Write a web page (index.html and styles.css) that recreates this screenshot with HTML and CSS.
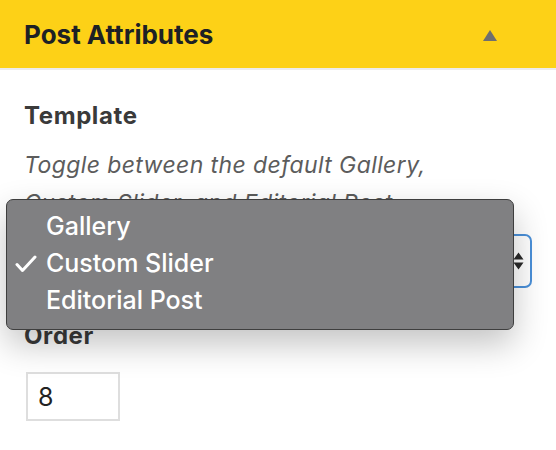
FILE: index.html
```html
<!DOCTYPE html>
<html>
<head>
<meta charset="utf-8">
<link rel="stylesheet" href="styles.css">
</head>
<body>
<div class="panel">
  <div class="panel-header">
    <h2 class="panel-title">Post Attributes</h2>
    <span class="toggle-arrow"></span>
  </div>
  <div class="panel-body">
    <div class="field-label">Template</div>
    <p class="help">Toggle between the default Gallery, Custom Slider, and Editorial Post.</p>
    <div class="select">
      <span class="select-value">Custom Slider</span>
      <svg class="select-arrows" width="11" height="20" viewBox="0 0 11 20"><path d="M5.5 1.5 L10.5 8.5 H0.5 Z M5.5 18.5 L10.5 11.5 H0.5 Z" fill="#2a2a2a"/></svg>
    </div>
    <div class="field-label order-label">Order</div>
    <div class="number-input">8</div>
  </div>
  <ul class="menu">
    <li class="menu-item">Gallery</li>
    <li class="menu-item checked"><svg class="check" width="22" height="18" viewBox="0 0 22 18"><path d="M2 9.5 L7.5 15.5 L20 2" fill="none" stroke="#fff" stroke-width="3" stroke-linecap="round" stroke-linejoin="round"/></svg>Custom Slider</li>
    <li class="menu-item">Editorial Post</li>
  </ul>
</div>
</body>
</html>
```
FILE: styles.css
```css
html, body {
  margin: 0;
  padding: 0;
  background: #fff;
}
body {
  font-family: Inter, "Liberation Sans", sans-serif;
  width: 556px;
  height: 450px;
  overflow: hidden;
}
.panel {
  position: relative;
}
.panel-header {
  height: 68px;
  background: #fdd117;
  border-bottom: 2px solid #ececec;
  display: flex;
  align-items: center;
  justify-content: space-between;
  padding: 0 24px;
}
.panel-title {
  margin: 0;
  font-size: 26px;
  font-weight: 700;
  color: #1d2125;
  letter-spacing: 0;
}
.toggle-arrow {
  width: 0;
  height: 0;
  border-left: 7px solid transparent;
  border-right: 7px solid transparent;
  border-bottom: 11px solid #6f6f6f;
  margin-right: 35px;
  margin-top: 2px;
}
.panel-body {
  padding: 30px 24px 0 24px;
}
.field-label {
  font-size: 24px;
  font-weight: 700;
  color: #3a3a3a;
  line-height: 32px;
  letter-spacing: 0.6px;
}
.help {
  margin: 14px 0 0 0;
  font-size: 23px;
  font-style: italic;
  color: #5c5c5c;
  line-height: 38px;
  letter-spacing: 0.4px;
  width: 480px;
}
.select {
  margin-top: 12px;
  height: 50px;
  border: 2px solid #4a90d9;
  border-radius: 7px;
  display: flex;
  align-items: center;
  justify-content: space-between;
  padding: 0 6px 0 14px;
  font-size: 23px;
  color: #333;
}
.select-arrows {
  display: block;
}
.order-label {
  margin-top: 32px;
}
.number-input {
  margin-top: 20px;
  margin-left: 2px;
  height: 45px;
  border: 2px solid #dedede;
  font-size: 25px;
  color: #222;
  display: flex;
  align-items: center;
  padding-left: 10px;
  box-sizing: content-box;
  width: 80px;
}
.menu {
  position: absolute;
  left: 6px;
  top: 199px;
  width: 508px;
  height: 131px;
  margin: 0;
  padding: 8px 0 0 0;
  list-style: none;
  background: #808082;
  border: 1px solid #3e3e3e;
  border-radius: 7px;
  box-shadow: 0 14px 34px rgba(0, 0, 0, 0.24);
  box-sizing: border-box;
}
.menu-item {
  position: relative;
  height: 37px;
  line-height: 37px;
  padding-left: 39px;
  font-size: 25px;
  font-weight: 500;
  color: #fff;
}
.check {
  position: absolute;
  left: 8px;
  top: 10px;
}
```
